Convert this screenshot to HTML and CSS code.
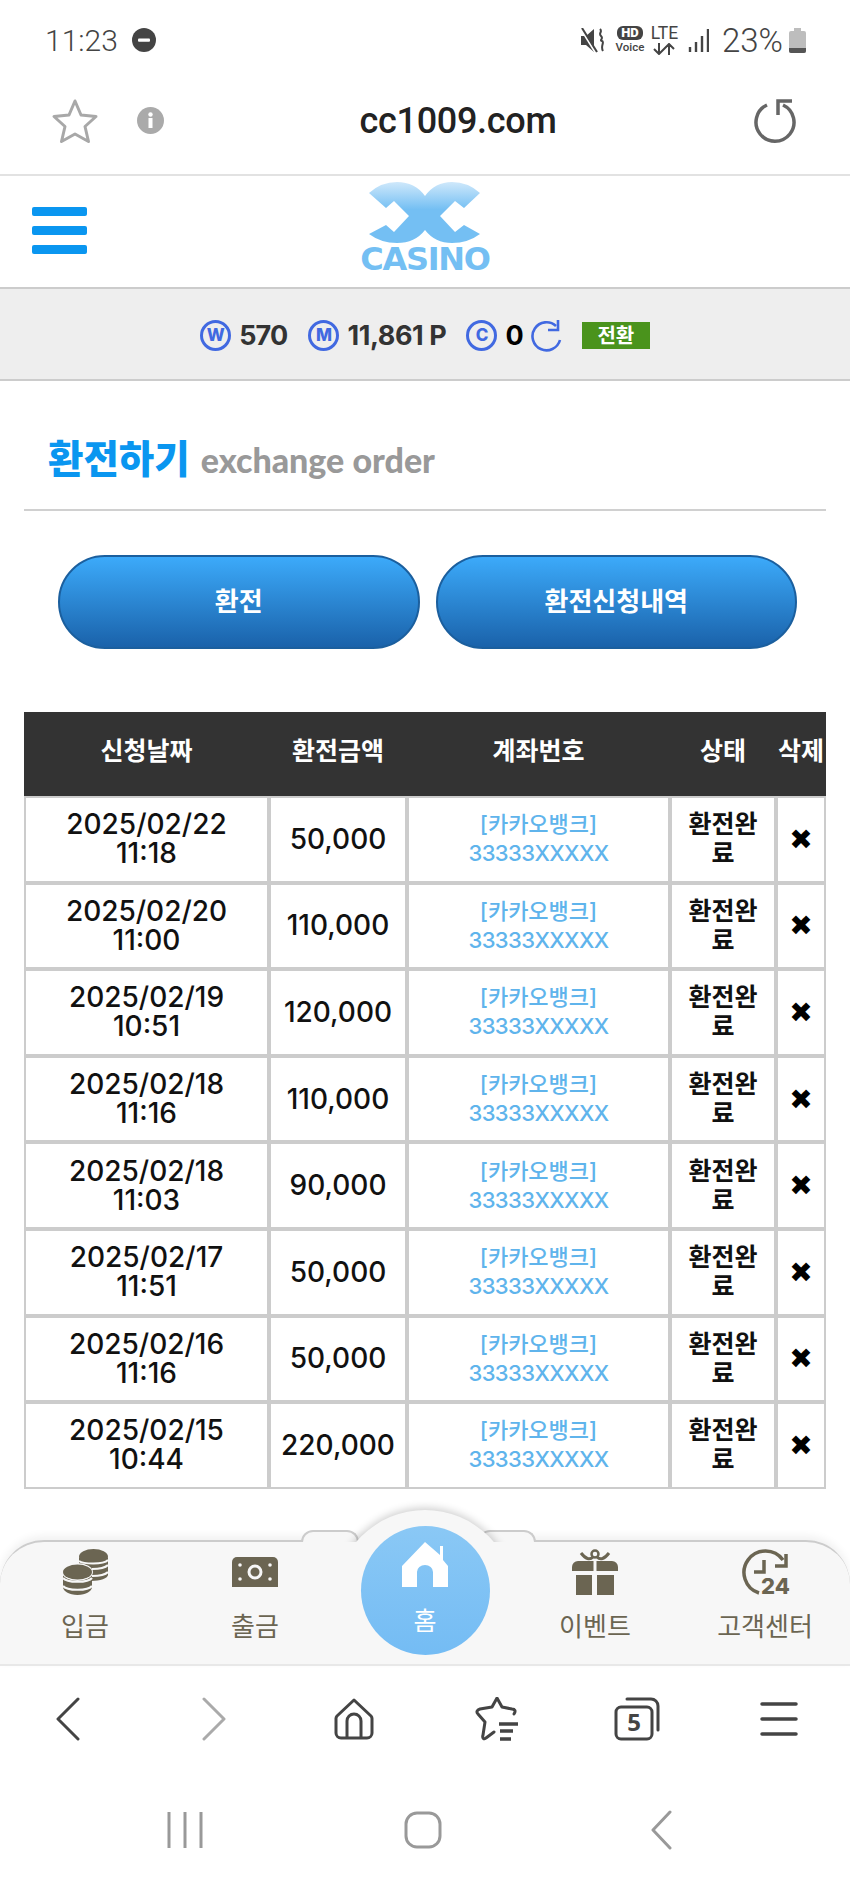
FILE: index.html
```html
<!DOCTYPE html>
<html lang="ko">
<head>
  <meta charset="UTF-8">
  <meta name="viewport" content="width=device-width, initial-scale=1.0">
  <title>환전하기</title>
  <link rel="stylesheet" href="styles.css">
</head>
<body>
  <!-- phone status bar -->
  <div class="status-bar">
    <div class="status-left">
      <span class="status-time">11:23</span>
      <svg width="24" height="24" viewBox="0 0 24 24"><circle cx="12" cy="12" r="12" fill="#444"/><rect x="6" y="10.500" width="12" height="3.200" rx="1" fill="#fff"/></svg>
    </div>
    <div class="status-right">
      <svg class="st-mute" width="23" height="25" viewBox="0 0 23 25"><path d="M0 8h5l8-7v23l-8-7H0z" fill="#444"/><path d="M0 1l14 23" stroke="#fff" stroke-width="2"/><path d="M1 0l15 24" stroke="#444" stroke-width="2"/><path d="M19 1c3 3-2 4 1 7s-2 4 1 5-2 5 1 10" fill="none" stroke="#444" stroke-width="2"/></svg>
      <div class="hd-voice"><span class="hd-badge">HD</span><span class="hd-label">Voice</span></div>
      <div class="lte"><span>LTE</span><svg width="24" height="12" viewBox="0 0 24 12"><path d="M7 0v11M2 6l5 5 5-5M17 12V1M12 6l5-5 5 5" fill="none" stroke="#444" stroke-width="2"/></svg></div>
      <svg class="signal" width="21" height="23" viewBox="0 0 21 23"><path d="M2 18v5M8 13v10M14 7v16M20 0v23" stroke="#444" stroke-width="2.400"/></svg>
      <span class="status-text">23%</span>
      <svg class="st-battery" width="17" height="25" viewBox="0 0 17 25"><path d="M5 0h7v3h3a2 2 0 0 1 2 2v18a2 2 0 0 1-2 2H2a2 2 0 0 1-2-2V5a2 2 0 0 1 2-2h3z" fill="#bdbdbd"/><path d="M0 20h17v3a2 2 0 0 1-2 2H2a2 2 0 0 1-2-2z" fill="#555"/></svg>
    </div>
  </div>

  <!-- browser address bar -->
  <div class="address-bar">
    <svg class="addr-star" width="48" height="48" viewBox="0 0 48 48"><path d="M24 4l6 14 15 1.500-11 10 3.500 15L24 37l-13.500 7.500L14 29.500 3 19.500 18 18z" fill="none" stroke="#a8a8a8" stroke-width="3" stroke-linejoin="round"/></svg>
    <svg class="addr-info" width="27" height="27" viewBox="0 0 27 27"><circle cx="13.500" cy="13.500" r="13.500" fill="#aaa"/><rect x="11.500" y="11" width="4" height="10" fill="#fff"/><circle cx="13.500" cy="7.500" r="2.200" fill="#fff"/></svg>
    <span class="addr-url">cc1009.com</span>
    <svg class="addr-reload" width="44" height="44" viewBox="0 0 44 44"><path d="M14 6a19 19 0 1 0 16 0" fill="none" stroke="#666" stroke-width="3.500"/><path d="M39 2H25v14" fill="none" stroke="#666" stroke-width="3.500"/></svg>
  </div>

  <!-- site header -->
  <header class="site-header">
    <div class="hamburger"><span></span><span></span><span></span></div>
    <div class="logo">
      <svg width="111" height="61" viewBox="0 0 111 61">
        <defs><linearGradient id="logoFade" x1="0" y1="0" x2="0" y2="1"><stop offset="0" stop-color="#cfe8fb"/><stop offset="0.45" stop-color="#74bff3"/></linearGradient></defs>
        <path d="M0 11Q12 0 28 0Q46 0 56 14Q66 0 83 0Q99 0 111 11L95 26L86 19L71 34L86 50L95 43L111 52Q99 61 83 61Q66 61 56 48Q46 61 28 61Q12 61 0 52L17 43L25 50L40 34L25 19L17 26Z" fill="url(#logoFade)"/>
      </svg>
      <span class="logo-text">CASINO</span>
    </div>
  </header>

  <!-- balance -->
  <div class="balance-bar">
    <span class="coin">W</span><span class="balance-val">570</span>
    <span class="coin coin-m">M</span><span class="balance-val balance-point">11,861 P</span>
    <span class="coin coin-c">C</span><span class="balance-val balance-zero">0</span>
    <svg class="balance-refresh" width="31" height="32" viewBox="0 0 31 32"><path d="M25 6A14 14 0 1 0 29 20" fill="none" stroke="#4169e1" stroke-width="2.600"/><path d="M27 0v10H17" fill="none" stroke="#4169e1" stroke-width="2.600"/></svg>
    <span class="convert-btn">전환</span>
  </div>

  <main class="content">
    <div class="page-title">
      <h1>환전하기</h1>
      <span class="page-sub">exchange order</span>
    </div>

    <div class="tab-buttons">
      <a class="pill-btn">환전</a>
      <a class="pill-btn">환전신청내역</a>
    </div>

    <table class="history">
      <thead>
        <tr>
          <th class="col-date">신청날짜</th>
          <th class="col-amount">환전금액</th>
          <th class="col-account">계좌번호</th>
          <th class="col-state">상태</th>
          <th class="col-del">삭제</th>
        </tr>
      </thead>
      <tbody>
        <tr><td>2025/02/22<br>11:18</td><td>50,000</td><td class="account">[카카오뱅크]<br><span class="acct-no">33333XXXXX</span></td><td class="state">환전완료</td><td class="del">✖</td></tr>
        <tr><td>2025/02/20<br>11:00</td><td>110,000</td><td class="account">[카카오뱅크]<br><span class="acct-no">33333XXXXX</span></td><td class="state">환전완료</td><td class="del">✖</td></tr>
        <tr><td>2025/02/19<br>10:51</td><td>120,000</td><td class="account">[카카오뱅크]<br><span class="acct-no">33333XXXXX</span></td><td class="state">환전완료</td><td class="del">✖</td></tr>
        <tr><td>2025/02/18<br>11:16</td><td>110,000</td><td class="account">[카카오뱅크]<br><span class="acct-no">33333XXXXX</span></td><td class="state">환전완료</td><td class="del">✖</td></tr>
        <tr><td>2025/02/18<br>11:03</td><td>90,000</td><td class="account">[카카오뱅크]<br><span class="acct-no">33333XXXXX</span></td><td class="state">환전완료</td><td class="del">✖</td></tr>
        <tr><td>2025/02/17<br>11:51</td><td>50,000</td><td class="account">[카카오뱅크]<br><span class="acct-no">33333XXXXX</span></td><td class="state">환전완료</td><td class="del">✖</td></tr>
        <tr><td>2025/02/16<br>11:16</td><td>50,000</td><td class="account">[카카오뱅크]<br><span class="acct-no">33333XXXXX</span></td><td class="state">환전완료</td><td class="del">✖</td></tr>
        <tr><td>2025/02/15<br>10:44</td><td>220,000</td><td class="account">[카카오뱅크]<br><span class="acct-no">33333XXXXX</span></td><td class="state">환전완료</td><td class="del">✖</td></tr>
      </tbody>
    </table>
  </main>

  <!-- site bottom menu -->
  <nav class="app-nav">
    <span class="nav-tab nav-tab-left"></span>
    <span class="nav-tab nav-tab-right"></span>
    <span class="nav-bump"></span>
    <a class="nav-item">
      <svg width="47" height="46" viewBox="0 0 47 46" fill="#6b6552">
        <path d="M17 10v22h12c9 0 17-3 17-6V9H17z"/>
        <path d="M30 20c6 0 13-1 16-4M30 27c6 0 13-1 16-4" fill="none" stroke="#f7f7f7" stroke-width="2.200"/>
        <ellipse cx="31.500" cy="8" rx="14.500" ry="8"/>
        <path d="M17 12c4 3 24 4 29-1" fill="none" stroke="#f7f7f7" stroke-width="2"/>
        <path d="M1 24v14c0 4 6 8 14.500 8S30 42 30 38V24z"/>
        <path d="M1 29c4 5 25 5 29 0M1 37c4 5 25 5 29 0" fill="none" stroke="#f7f7f7" stroke-width="2.200"/>
        <ellipse cx="15.500" cy="23" rx="15.500" ry="9" fill="#f7f7f7"/>
        <ellipse cx="15.500" cy="23" rx="14.500" ry="7.500"/>
      </svg>
      <span>입금</span>
    </a>
    <a class="nav-item">
      <svg class="icon-note" width="46" height="30" viewBox="0 0 46 30"><path d="M5 0h36a5 5 0 0 1 5 5v25H0V5a5 5 0 0 1 5-5z" fill="#6b6552"/><circle cx="23" cy="15" r="6" fill="none" stroke="#f7f7f7" stroke-width="3"/><circle cx="8" cy="8" r="1.800" fill="#f7f7f7"/><circle cx="8" cy="22" r="1.800" fill="#f7f7f7"/><circle cx="38" cy="8" r="1.800" fill="#f7f7f7"/><circle cx="38" cy="22" r="1.800" fill="#f7f7f7"/></svg>
      <span>출금</span>
    </a>
    <a class="nav-item nav-home">
      <svg width="46" height="45" viewBox="0 0 46 45"><path d="M23 0L38 13V4h3v14l5 6v21H31V30a8 7 0 0 0-16 0v15H0V24z" fill="#fff"/></svg>
      <span>홈</span>
    </a>
    <a class="nav-item">
      <svg width="46" height="46" viewBox="0 0 46 46" fill="#6b6552">
        <circle cx="23" cy="5" r="3.500" fill="none" stroke="#6b6552" stroke-width="2.500"/>
        <path d="M21 8Q16 13 9 4M25 8Q30 13 37 4" fill="none" stroke="#6b6552" stroke-width="3"/>
        <path d="M6 12h15.500v10H0v-4a6 6 0 0 1 6-6zM24.500 12H40a6 6 0 0 1 6 6v4H24.500z"/>
        <path d="M4 26h16v20H4zM25 26h17v20H25z"/>
      </svg>
      <span>이벤트</span>
    </a>
    <a class="nav-item">
      <svg class="icon-clock" width="48" height="46" viewBox="0 0 48 46">
        <path d="M18 44A21.500 21.500 0 1 1 42 11" fill="none" stroke="#6b6552" stroke-width="3.500"/>
        <path d="M45 5V17H34" fill="none" stroke="#6b6552" stroke-width="3.500"/>
        <path d="M23 11V23H13" fill="none" stroke="#6b6552" stroke-width="3.500"/>
        <text x="20" y="45" class="clock-num">24</text>
      </svg>
      <span>고객센터</span>
    </a>
  </nav>

  <!-- browser toolbar -->
  <div class="browser-bar">
    <svg class="bb-back" width="26" height="44" viewBox="0 0 26 44"><path d="M23 2L3 22l20 20" fill="none" stroke="#444" stroke-width="3" stroke-linecap="round" stroke-linejoin="round"/></svg>
    <svg class="bb-forward" width="26" height="44" viewBox="0 0 26 44"><path d="M3 2l20 20L3 42" fill="none" stroke="#aaa" stroke-width="3" stroke-linecap="round" stroke-linejoin="round"/></svg>
    <svg width="42" height="42" viewBox="0 0 42 42"><path d="M21 2L4 18a4 4 0 0 0-1 3v14a5 5 0 0 0 5 5h26a5 5 0 0 0 5-5V21a4 4 0 0 0-1-3z" fill="none" stroke="#444" stroke-width="3" stroke-linejoin="round"/><path d="M14 40V23a7 7 0 0 1 14 0v17" fill="none" stroke="#444" stroke-width="3"/></svg>
    <svg width="46" height="44" viewBox="0 0 46 44"><path d="M41 17c2-3 1-5-2-5l-10-2-5-9-5 9-12 2c-3 1-4 3-2 5l7 8-2 13c-1 3 1 5 3 3l8-6" fill="none" stroke="#444" stroke-width="3" stroke-linecap="round" stroke-linejoin="round"/><path d="M26 27h19M27 34h13M27 42h11" stroke="#444" stroke-width="3.500"/></svg>
    <svg width="46" height="44" viewBox="0 0 46 44"><rect x="2" y="10" width="36" height="32" rx="5" fill="none" stroke="#444" stroke-width="3"/><path d="M13 2h24a7 7 0 0 1 7 7v24" fill="none" stroke="#444" stroke-width="3" stroke-linecap="round"/><text x="20" y="34" class="tab-count">5</text></svg>
    <svg width="38" height="36" viewBox="0 0 38 36"><path d="M2 3h34M2 18h34M2 33h34" stroke="#444" stroke-width="3.500" stroke-linecap="round"/></svg>
  </div>

  <!-- android nav bar -->
  <div class="system-bar">
    <svg width="36" height="38" viewBox="0 0 36 38"><path d="M2 1v36M18 1v36M34 1v36" stroke="#999" stroke-width="3"/></svg>
    <svg width="38" height="38" viewBox="0 0 38 38"><rect x="2" y="2" width="34" height="34" rx="11" fill="none" stroke="#999" stroke-width="3"/></svg>
    <svg width="22" height="40" viewBox="0 0 22 40"><path d="M20 2L3 20l17 18" fill="none" stroke="#999" stroke-width="3" stroke-linecap="round" stroke-linejoin="round"/></svg>
  </div>
</body>
</html>
```

FILE: styles.css
```css
/* Basic page */
* {
  box-sizing: border-box;
}
body {
  margin: 0;
  width: 850px;
  height: 1889px;
  overflow: hidden;
  display: flex;
  flex-direction: column;
  background-color: #fff;
  font-family: "Noto Sans CJK KR", "Noto Sans", sans-serif;
  color: #111;
}
svg {
  display: block;
}

/* Status bar */
.status-bar {
  height: 78px;
  flex: none;
  display: flex;
  align-items: center;
  justify-content: space-between;
  padding: 2px 44px 0 45px;
  color: #444;
}
.status-left,
.status-right {
  display: flex;
  align-items: center;
}
.status-left {
  gap: 14px;
}
.status-time {
  font-family: Roboto, sans-serif;
  font-weight: 300;
  font-size: 30px;
}
.status-text {
  font-family: Roboto, sans-serif;
  font-weight: 300;
  font-size: 33px;
}
.st-mute {
  margin-right: 13px;
}
.hd-voice,
.lte {
  display: flex;
  flex-direction: column;
  align-items: center;
  font-family: Roboto, sans-serif;
  line-height: 1;
}
.hd-voice {
  width: 26px;
  margin-right: 9px;
}
.hd-badge {
  width: 26px;
  height: 14px;
  background-color: #444;
  color: #fff;
  font-size: 13px;
  font-weight: 900;
  line-height: 14px;
  text-align: center;
  border-radius: 6px;
}
.hd-label {
  font-size: 11.500px;
  font-weight: 500;
  margin-top: 2px;
}
.lte {
  font-size: 17.500px;
  font-weight: 400;
  gap: 1px;
  width: 25px;
  margin-right: 11px;
}
.signal {
  margin-right: 13px;
}
.st-battery {
  margin-left: 6px;
}

/* Address bar */
.address-bar {
  position: relative;
  height: 98px;
  flex: none;
  border-bottom: 2px solid #e2e2e2;
  display: flex;
  align-items: center;
  padding: 0 0 11px 51px;
}
.addr-info {
  margin-left: 38px;
}
.addr-url {
  position: absolute;
  left: 0;
  right: 0;
  padding-left: 66px;
  text-align: center;
  font-family: Roboto, sans-serif;
  font-size: 36px;
  font-weight: 500;
  letter-spacing: -0.300px;
  color: #222;
}
.addr-reload {
  margin-left: auto;
  margin-right: 53px;
}

/* Site header */
.site-header {
  position: relative;
  height: 113px;
  flex: none;
  border-bottom: 2px solid #ccc;
  display: flex;
  justify-content: center;
  padding-top: 6px;
}
.hamburger {
  position: absolute;
  left: 32px;
  top: 31px;
  display: flex;
  flex-direction: column;
  gap: 10px;
}
.hamburger span {
  display: block;
  width: 55px;
  height: 9px;
  border-radius: 2px;
  background-color: #0a96f0;
}
.logo {
  display: flex;
  flex-direction: column;
  align-items: center;
}
.logo-text {
  margin-top: 2px;
  font-family: "DejaVu Sans", sans-serif;
  font-weight: 700;
  font-size: 32px;
  line-height: 29px;
  letter-spacing: -1.300px;
  color: #74bff3;
}

/* Balance bar */
.balance-bar {
  height: 92px;
  flex: none;
  background-color: #eee;
  border-bottom: 2px solid #ccc;
  display: flex;
  align-items: center;
  justify-content: center;
  padding-top: 3px;
}
.coin {
  width: 31px;
  height: 31px;
  border: 3px solid #4169e1;
  border-radius: 50%;
  color: #4169e1;
  font-family: Inter, sans-serif;
  font-size: 17px;
  font-weight: 800;
  line-height: 25px;
  text-align: center;
}
.coin-m {
  margin-left: 21px;
}
.coin-c {
  margin-left: 20px;
}
.balance-val {
  margin-left: 8px;
  font-family: Inter, sans-serif;
  font-size: 27px;
  font-weight: 700;
  letter-spacing: -0.800px;
  color: #333;
}
.balance-point {
  letter-spacing: -0.400px;
}
.balance-zero {
  color: #000;
}
.balance-refresh {
  margin-left: 8px;
}
.convert-btn {
  margin-left: 20px;
  width: 68px;
  height: 27px;
  background-color: #4a931c;
  color: #fff;
  font-size: 20px;
  font-weight: 700;
  line-height: 25px;
  text-align: center;
}

/* Main content */
.content {
  flex: 1;
  min-height: 0;
  padding: 0 24px;
}
.page-title {
  height: 130px;
  display: flex;
  align-items: center;
  gap: 11px;
  padding: 22px 0 0 24px;
  border-bottom: 2px solid #d0d0d0;
}
.page-title h1 {
  margin: 0;
  font-size: 38.500px;
  font-weight: 900;
  color: #0a96f0;
}
.page-sub {
  font-family: Lato, sans-serif;
  font-size: 34px;
  font-weight: 900;
  color: #999;
  padding-top: 6px;
}
.tab-buttons {
  display: flex;
  gap: 16px;
  margin: 44px 29px 0 34px;
}
.pill-btn {
  flex: 1;
  height: 94px;
  border: 2px solid #1b5f9e;
  border-radius: 47px;
  background: linear-gradient(#3caafa, #1a62aa);
  color: #fff;
  font-size: 26px;
  font-weight: 700;
  line-height: 86px;
  text-align: center;
}

/* History table */
.history {
  width: 802px;
  margin-top: 63px;
  table-layout: fixed;
  border-collapse: separate;
  border-spacing: 0;
  font-family: Inter, "Noto Sans CJK KR", sans-serif;
  font-size: 28px;
  line-height: 29px;
  font-weight: 500;
}
.history th {
  height: 84px;
  padding: 0 0 5px;
  background-color: #333;
  color: #fff;
  font-size: 25px;
  font-weight: 700;
}
.history td {
  height: 86.600px;
  padding: 0 8px;
  border: 2px solid #ccc;
  text-align: center;
  color: #111;
}
.col-date {
  width: 245px;
}
.col-amount {
  width: 138px;
}
.col-account {
  width: 263px;
}
.col-state {
  width: 106px;
}
.col-del {
  width: 50px;
}
.history td.account {
  color: #5fb4ec;
  font-weight: 500;
  font-size: 22px;
}
.acct-no {
  letter-spacing: -0.600px;
}
.history td.state {
  font-size: 25px;
  font-weight: 700;
  padding: 0 10px;
}
.history td.del {
  padding: 0;
  font-family: "DejaVu Sans", sans-serif;
  font-size: 28px;
  color: #000;
}

/* Bottom menu */
.app-nav {
  position: relative;
  height: 126px;
  flex: none;
  display: grid;
  grid-template-columns: repeat(5, 170px);
  background-color: #f7f7f7;
  border-top: 2px solid #ccc;
  border-bottom: 2px solid #e8e8e8;
  border-radius: 44px 44px 0 0;
  box-shadow: 0 -4px 8px rgba(0, 0, 0, 0.06);
}
.nav-bump {
  position: absolute;
  left: 325px;
  top: -53px;
  width: 200px;
  height: 53px;
  overflow: hidden;
}
.nav-bump::before {
  content: "";
  position: absolute;
  left: 10px;
  top: 21px;
  width: 180px;
  height: 180px;
  border-radius: 50%;
  background-color: #f7f7f7;
  box-shadow: 0 -2px 8px rgba(0, 0, 0, 0.2);
}
.nav-tab {
  position: absolute;
  top: -12px;
  width: 58px;
  height: 12px;
  background-color: #f7f7f7;
  border: 2px solid #ccc;
  border-bottom: none;
  border-radius: 18px 18px 0 0;
}
.nav-tab-left {
  left: 301px;
}
.nav-tab-right {
  left: 478px;
}
.nav-item {
  display: flex;
  flex-direction: column;
  align-items: center;
  padding-top: 7px;
  color: #6b6552;
  font-size: 26px;
  line-height: 30px;
}
.nav-item span {
  margin-top: 15px;
}
.icon-note {
  margin: 8px 0 8px;
}
.icon-clock {
  overflow: visible;
}
.nav-home {
  position: relative;
  align-self: start;
  justify-self: center;
  width: 129px;
  height: 129px;
  margin-top: -16px;
  padding-top: 16px;
  border-radius: 50%;
  background: linear-gradient(#8ac8f5, #74bcf4);
  color: #fff;
}
.nav-home span {
  margin-top: 17px;
  font-size: 25px;
}
.clock-num {
  font-family: Inter, sans-serif;
  font-size: 22px;
  font-weight: 800;
  fill: #6b6552;
}

/* Browser toolbar */
.browser-bar {
  height: 111px;
  flex: none;
  display: grid;
  grid-template-columns: repeat(6, 1fr);
  justify-items: center;
  align-items: center;
  padding-bottom: 6px;
}
.bb-back {
  margin-right: 6px;
}
.bb-forward {
  margin-left: 4px;
}
.tab-count {
  font-family: "Noto Sans", sans-serif;
  font-size: 24px;
  font-weight: 700;
  fill: #444;
  text-anchor: middle;
}

/* System nav */
.system-bar {
  flex: none;
  height: 112px;
  display: grid;
  grid-template-columns: repeat(3, 238px);
  justify-content: center;
  justify-items: center;
  padding: 0 4px 6px 0;
  align-items: center;
}
```
